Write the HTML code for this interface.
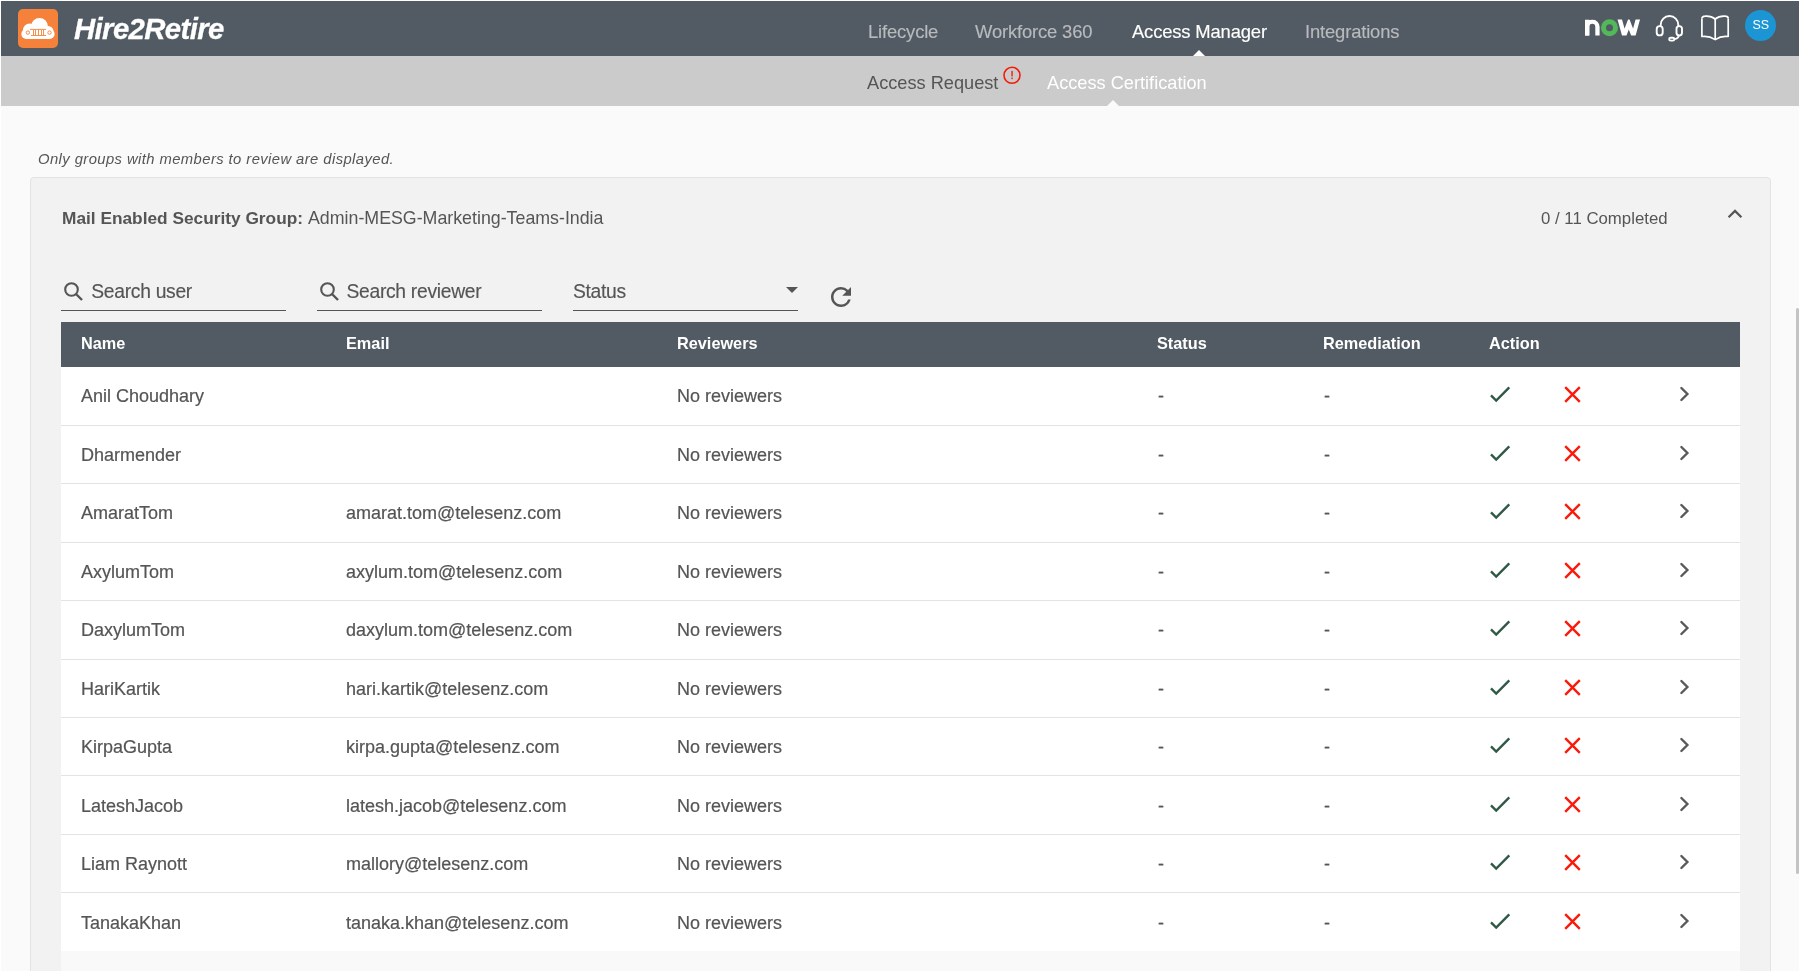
<!DOCTYPE html>
<html><head><meta charset="utf-8">
<style>
*{box-sizing:border-box;margin:0;padding:0}
html,body{width:1800px;height:971px;overflow:hidden;background:#fff;font-family:"Liberation Sans",sans-serif;-webkit-font-smoothing:antialiased}
.abs{position:absolute;white-space:nowrap;line-height:1}
#wrap{position:absolute;left:0;top:0;width:1800px;height:971px;will-change:transform}
#pg{position:absolute;left:1px;top:1px;width:1798px;height:970px;background:#fafafa}
.nav{position:absolute;left:1px;top:1px;width:1798px;height:55px;background:#525b63}
.sub{position:absolute;left:1px;top:56px;width:1798px;height:50px;background:#cbcbcb}
.brand{left:74px;top:14px;font-size:29.3px;letter-spacing:-0.6px;-webkit-text-stroke:0.3px #fff;font-weight:bold;font-style:italic;color:#fff;transform-origin:0 0}
.ni{top:22.6px;font-size:18.4px;letter-spacing:-0.15px;color:#b8babd;-webkit-text-stroke:0.15px #b8babd}
.si{top:74px;font-size:18.2px;color:#555}
.note{left:38px;top:151.5px;font-size:14.8px;letter-spacing:0.42px;font-style:italic;color:#555}
.card{position:absolute;left:30px;top:177px;width:1741px;height:820px;background:#f2f2f2;border:1px solid #e3e3e3;border-radius:4px}
.gh{top:210px;font-size:17.5px;color:#555}
.inp{position:absolute;top:310px;width:225px;height:1px;background:#555}
.ph{top:281.5px;font-size:19.3px;letter-spacing:-0.3px;color:#555;-webkit-text-stroke:0.15px #555}
.thead{position:absolute;left:61px;top:322px;width:1679px;height:45px;background:#525b63}
.th{top:335.3px;font-size:16.3px;font-weight:bold;color:#fff}
.tbody{position:absolute;left:61px;top:367px;width:1679px;height:585px;background:#fff}
.bl{position:absolute;left:61px;width:1679px;height:1px;background:#e3e3e3}
.rt{position:absolute;white-space:nowrap;line-height:1;font-size:18px;color:#555;-webkit-text-stroke:0.2px #555}
.ic{position:absolute;left:0}
.tail{position:absolute;left:61px;top:951px;width:1679px;height:30px;background:#f9f9f9}
.sb{position:absolute;left:1796px;top:308px;width:3px;height:566px;background:#c4c4c4;border-radius:2px}
</style></head><body><div id="wrap">
<div id="pg"></div>
<div class="nav"></div>
<svg class="abs" style="left:18px;top:9px" width="40" height="39" viewBox="0 0 40 39">
  <rect x="0" y="0" width="40" height="39" rx="5" fill="#f5813a"/>
  <g fill="#fff">
    <circle cx="21.5" cy="17.5" r="8.5"/>
    <circle cx="11.5" cy="21" r="6.5"/>
    <circle cx="30" cy="22.5" r="5.5"/>
    <rect x="3.3" y="20" width="33.3" height="10" rx="5"/>
  </g>
  <g stroke="#f5813a" fill="none" stroke-width="0.9">
    <line x1="12" y1="20.4" x2="28" y2="20.4"/>
    <line x1="13" y1="26.5" x2="28" y2="26.5"/>
    <line x1="20.5" y1="20.4" x2="20.5" y2="26.5"/>
    <line x1="15.5" y1="21" x2="15.5" y2="26"/>
    <line x1="17.5" y1="21" x2="17.5" y2="26"/>
    <line x1="23.5" y1="21" x2="23.5" y2="26"/>
    <line x1="25.5" y1="21" x2="25.5" y2="26"/>
    <circle cx="9.9" cy="23.6" r="1.7"/>
    <circle cx="31.5" cy="23.6" r="1.7"/>
  </g>
</svg>
<div class="abs brand">Hire2Retire</div>
<div class="abs ni" style="left:868px">Lifecycle</div>
<div class="abs ni" style="left:975px">Workforce 360</div>
<div class="abs ni" style="left:1132px;color:#fff;-webkit-text-stroke:0.15px #fff">Access Manager</div>
<div class="abs ni" style="left:1305px">Integrations</div>
<!-- now logo -->
<svg class="abs" style="left:1580px;top:14px" width="65" height="26" viewBox="0 0 65 26">
  <defs><clipPath id="nc"><rect x="0" y="5.5" width="65" height="16"/></clipPath></defs>
  <g clip-path="url(#nc)">
  <path d="M7.15 23V12.8A5.15 5.15 0 0 1 17.45 12.8V23" fill="none" stroke="#fff" stroke-width="4.3"/>
  <rect x="5" y="5.5" width="4.3" height="17" fill="#fff"/>
  <path d="M39.4 4L44.2 21.5L48.8 9.5L53.4 21.5L58.2 4" fill="none" stroke="#fff" stroke-width="4.3" stroke-linejoin="miter" stroke-miterlimit="10"/>
  </g>
  <circle cx="29.5" cy="13.8" r="6" fill="none" stroke="#53b85a" stroke-width="5"/>
</svg>
<!-- headset -->
<svg class="abs" style="left:1650px;top:10px" width="40" height="36" viewBox="0 0 40 36">
  <g fill="none" stroke="#fff" stroke-width="1.9">
    <path d="M10.7 16.5V14.8A8.8 8.8 0 0 1 28.3 14.8V16.5"/>
    <rect x="6.7" y="16.1" width="6" height="9.3" rx="3"/>
    <rect x="26.5" y="16.1" width="5.5" height="9.3" rx="2.75"/>
    <path d="M29 25.6Q28.5 28 25 29.2"/>
    <rect x="19.2" y="27.7" width="5.1" height="2.9" rx="1.45"/>
  </g>
</svg>
<!-- book -->
<svg class="abs" style="left:1698px;top:10px" width="36" height="34" viewBox="0 0 36 34">
  <g fill="none" stroke="#fff" stroke-width="1.7" stroke-linejoin="round">
    <path d="M3.9 8.5V26.5Q11 25.5 17.2 29.6Q23.4 25.5 30.2 26.5V8.5"/>
    <path d="M3.9 8.5Q4.2 6.4 7 6.2Q13 5.6 17.2 9Q21.4 5.6 27.4 6.2Q30.2 6.4 30.2 8.5"/>
    <path d="M17.2 9V29.6"/>
  </g>
</svg>
<!-- avatar -->
<div class="abs" style="left:1745px;top:10px;width:31.3px;height:31.3px;border-radius:50%;background:#1b95d3"></div>
<div class="abs" style="left:1752.5px;top:19px;font-size:12.5px;color:#fff">SS</div>

<div class="sub"></div>
<svg class="abs" style="left:1193px;top:50px" width="12" height="6" viewBox="0 0 12 6"><path d="M0 6L6 0L12 6Z" fill="#fff"/></svg>
<div class="abs si" style="left:867px">Access Request</div>
<svg class="abs" style="left:1003px;top:66px" width="19" height="19" viewBox="0 0 19 19">
  <circle cx="9" cy="9.3" r="8" fill="none" stroke="#f41a0a" stroke-width="1.6"/>
  <rect x="8.35" y="4.9" width="1.4" height="5.5" fill="#f41a0a"/>
  <rect x="8.35" y="11.6" width="1.4" height="1.5" fill="#f41a0a"/>
</svg>
<div class="abs si" style="left:1047px;color:#fff">Access Certification</div>
<svg class="abs" style="left:1107px;top:100px" width="12" height="6" viewBox="0 0 12 6"><path d="M0 6L6 0L12 6Z" fill="#fafafa"/></svg>

<div class="abs note">Only groups with members to review are displayed.</div>
<div class="card"></div>
<div class="abs gh" style="left:62px;font-weight:bold;font-size:17.3px">Mail Enabled Security Group:</div>
<div class="abs gh" style="left:308px;font-size:17.8px">Admin-MESG-Marketing-Teams-India</div>
<div class="abs gh" style="left:1541px;top:211px;font-size:16.8px">0 / 11 Completed</div>
<svg class="abs" style="left:1726px;top:207px" width="18" height="14" viewBox="0 0 18 14"><path d="M2.6 10.3L9 3.9L15.4 10.3" fill="none" stroke="#555" stroke-width="2.2"/></svg>

<!-- search inputs -->
<div class="inp" style="left:61px"></div>
<div class="inp" style="left:317px"></div>
<div class="inp" style="left:573px"></div>
<svg class="abs" style="left:62px;top:280px" width="24" height="24" viewBox="0 0 24 24"><circle cx="9.5" cy="9.5" r="6.3" fill="none" stroke="#555" stroke-width="2.1"/><path d="M14 14L20 20" stroke="#555" stroke-width="2.4"/></svg>
<svg class="abs" style="left:318px;top:280px" width="24" height="24" viewBox="0 0 24 24"><circle cx="9.5" cy="9.5" r="6.3" fill="none" stroke="#555" stroke-width="2.1"/><path d="M14 14L20 20" stroke="#555" stroke-width="2.4"/></svg>
<div class="abs ph" style="left:91.3px">Search user</div>
<div class="abs ph" style="left:346.5px">Search reviewer</div>
<div class="abs ph" style="left:573px">Status</div>
<svg class="abs" style="left:785px;top:286px" width="14" height="8" viewBox="0 0 14 8"><path d="M1 1H13L7 7Z" fill="#555"/></svg>
<svg class="abs" style="left:826px;top:282px" width="30" height="30" viewBox="0 0 24 24"><path d="M17.65 6.35A7.958 7.958 0 0 0 12 4c-4.42 0-7.99 3.58-7.99 8s3.57 8 7.99 8c3.73 0 6.84-2.55 7.73-6h-2.08A5.99 5.99 0 0 1 12 18c-3.31 0-6-2.69-6-6s2.69-6 6-6c1.66 0 3.14.69 4.22 1.78L13 11h7V4l-2.35 2.35z" fill="#555"/></svg>

<div class="thead"></div>
<div class="abs th" style="left:81px">Name</div>
<div class="abs th" style="left:346px">Email</div>
<div class="abs th" style="left:677px">Reviewers</div>
<div class="abs th" style="left:1157px">Status</div>
<div class="abs th" style="left:1323px">Remediation</div>
<div class="abs th" style="left:1489px">Action</div>

<svg width="0" height="0" style="position:absolute">
  <defs>
    <g id="icons">
      <path d="M1491 28.3L1496.2 33.5L1509.3 20.4" fill="none" stroke="#2f5846" stroke-width="2.4"/>
      <path d="M1565.2 20.2L1579.8 34.8M1579.8 20.2L1565.2 34.8" fill="none" stroke="#fa1a0c" stroke-width="2.4"/>
      <path d="M1681.4 21L1687.4 27L1681.4 33" fill="none" stroke="#595959" stroke-width="2.4" stroke-linecap="round"/>
    </g>
  </defs>
</svg>
<div class="tbody"></div>
<div class="bl" style="top:425px"></div>
<div class="bl" style="top:483px"></div>
<div class="bl" style="top:542px"></div>
<div class="bl" style="top:600px"></div>
<div class="bl" style="top:659px"></div>
<div class="bl" style="top:717px"></div>
<div class="bl" style="top:775px"></div>
<div class="bl" style="top:834px"></div>
<div class="bl" style="top:892px"></div>
<div class="rt" style="left:81px;top:387.00px">Anil Choudhary</div>
<div class="rt" style="left:677px;top:387.00px">No reviewers</div>
<div class="rt" style="left:1158px;top:387.00px">-</div>
<div class="rt" style="left:1324px;top:387.00px">-</div>
<svg class="ic" style="top:367.00px" width="1800" height="58" viewBox="0 0 1800 58"><use href="#icons"/></svg>
<div class="rt" style="left:81px;top:445.55px">Dharmender</div>
<div class="rt" style="left:677px;top:445.55px">No reviewers</div>
<div class="rt" style="left:1158px;top:445.55px">-</div>
<div class="rt" style="left:1324px;top:445.55px">-</div>
<svg class="ic" style="top:425.55px" width="1800" height="58" viewBox="0 0 1800 58"><use href="#icons"/></svg>
<div class="rt" style="left:81px;top:504.10px">AmaratTom</div>
<div class="rt" style="left:346px;top:504.10px">amarat.tom@telesenz.com</div>
<div class="rt" style="left:677px;top:504.10px">No reviewers</div>
<div class="rt" style="left:1158px;top:504.10px">-</div>
<div class="rt" style="left:1324px;top:504.10px">-</div>
<svg class="ic" style="top:484.10px" width="1800" height="58" viewBox="0 0 1800 58"><use href="#icons"/></svg>
<div class="rt" style="left:81px;top:562.65px">AxylumTom</div>
<div class="rt" style="left:346px;top:562.65px">axylum.tom@telesenz.com</div>
<div class="rt" style="left:677px;top:562.65px">No reviewers</div>
<div class="rt" style="left:1158px;top:562.65px">-</div>
<div class="rt" style="left:1324px;top:562.65px">-</div>
<svg class="ic" style="top:542.65px" width="1800" height="58" viewBox="0 0 1800 58"><use href="#icons"/></svg>
<div class="rt" style="left:81px;top:621.20px">DaxylumTom</div>
<div class="rt" style="left:346px;top:621.20px">daxylum.tom@telesenz.com</div>
<div class="rt" style="left:677px;top:621.20px">No reviewers</div>
<div class="rt" style="left:1158px;top:621.20px">-</div>
<div class="rt" style="left:1324px;top:621.20px">-</div>
<svg class="ic" style="top:601.20px" width="1800" height="58" viewBox="0 0 1800 58"><use href="#icons"/></svg>
<div class="rt" style="left:81px;top:679.75px">HariKartik</div>
<div class="rt" style="left:346px;top:679.75px">hari.kartik@telesenz.com</div>
<div class="rt" style="left:677px;top:679.75px">No reviewers</div>
<div class="rt" style="left:1158px;top:679.75px">-</div>
<div class="rt" style="left:1324px;top:679.75px">-</div>
<svg class="ic" style="top:659.75px" width="1800" height="58" viewBox="0 0 1800 58"><use href="#icons"/></svg>
<div class="rt" style="left:81px;top:738.30px">KirpaGupta</div>
<div class="rt" style="left:346px;top:738.30px">kirpa.gupta@telesenz.com</div>
<div class="rt" style="left:677px;top:738.30px">No reviewers</div>
<div class="rt" style="left:1158px;top:738.30px">-</div>
<div class="rt" style="left:1324px;top:738.30px">-</div>
<svg class="ic" style="top:718.30px" width="1800" height="58" viewBox="0 0 1800 58"><use href="#icons"/></svg>
<div class="rt" style="left:81px;top:796.85px">LateshJacob</div>
<div class="rt" style="left:346px;top:796.85px">latesh.jacob@telesenz.com</div>
<div class="rt" style="left:677px;top:796.85px">No reviewers</div>
<div class="rt" style="left:1158px;top:796.85px">-</div>
<div class="rt" style="left:1324px;top:796.85px">-</div>
<svg class="ic" style="top:776.85px" width="1800" height="58" viewBox="0 0 1800 58"><use href="#icons"/></svg>
<div class="rt" style="left:81px;top:855.40px">Liam Raynott</div>
<div class="rt" style="left:346px;top:855.40px">mallory@telesenz.com</div>
<div class="rt" style="left:677px;top:855.40px">No reviewers</div>
<div class="rt" style="left:1158px;top:855.40px">-</div>
<div class="rt" style="left:1324px;top:855.40px">-</div>
<svg class="ic" style="top:835.40px" width="1800" height="58" viewBox="0 0 1800 58"><use href="#icons"/></svg>
<div class="rt" style="left:81px;top:913.95px">TanakaKhan</div>
<div class="rt" style="left:346px;top:913.95px">tanaka.khan@telesenz.com</div>
<div class="rt" style="left:677px;top:913.95px">No reviewers</div>
<div class="rt" style="left:1158px;top:913.95px">-</div>
<div class="rt" style="left:1324px;top:913.95px">-</div>
<svg class="ic" style="top:893.95px" width="1800" height="58" viewBox="0 0 1800 58"><use href="#icons"/></svg>
<div class="tail"></div>
<div class="sb"></div>
</div></body></html>
